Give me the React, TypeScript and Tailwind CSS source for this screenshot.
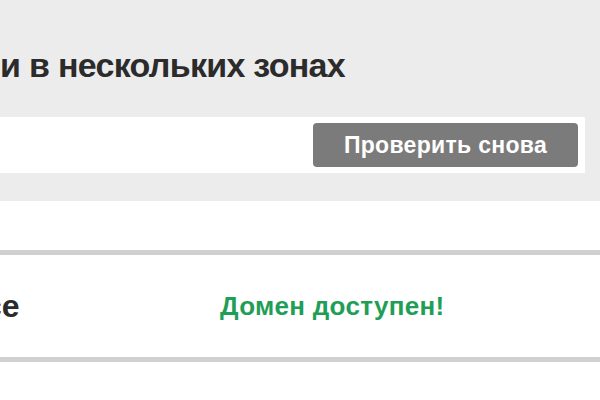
export default function App() {
  return (
    <div className="h-[400px] w-[600px] overflow-hidden bg-white font-['Liberation_Sans',Arial,sans-serif]">
      <section className="h-[201px] bg-[#ececec] pt-[45px]">
        <h1 className="whitespace-nowrap text-[34px] font-bold leading-[40px] tracking-[-0.7px] text-[#2b2b2b]">
          и в нескольких зонах
        </h1>
        <div className="mt-[32px] mr-[15px] flex h-[56px] items-center justify-end bg-white pr-[7px]">
          <button className="h-[44px] w-[265px] rounded-[4px] bg-[#7b7b7b] text-[23px] font-bold tracking-[0.3px] text-white">
            Проверить снова
          </button>
        </div>
      </section>

      <div className="mt-[49px] border-y-[5px] border-[#d0d0d0]">
        <div className="flex h-[102px] items-center whitespace-nowrap">
          <div className="ml-[-16px] w-[236px] text-[32px] font-bold text-[#2b2b2b]">ce</div>
          <div className="text-[26px] font-bold tracking-[0.3px] text-[#1f9e57]">Домен доступен!</div>
        </div>
      </div>
    </div>
  );
}
